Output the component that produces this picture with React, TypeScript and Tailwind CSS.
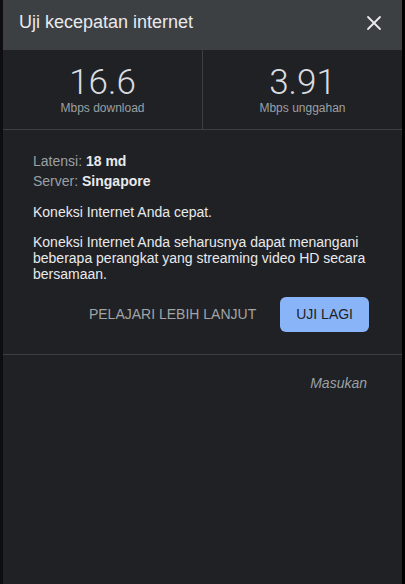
import { X } from 'lucide-react';

const stats = [
  { value: '16.6', label: 'Mbps download' },
  { value: '3.91', label: 'Mbps unggahan' },
];

export default function App() {
  return (
    <div
      className="flex h-[584px] w-full bg-black"
      style={{ fontFamily: '"Liberation Sans", Arial, sans-serif' }}
    >
      {/* Page behind the dialog */}
      <div className="w-[3px] shrink-0 bg-[#0e0e10]" />

      <div className="flex flex-1 flex-col bg-[#202124]">
        {/* Header */}
        <div className="flex h-[50px] shrink-0 items-center justify-between bg-[#3c4043] pb-[5px] pl-4 pr-[16px]">
          <h1 className="text-[18px] font-normal text-[#e8eaed]">Uji kecepatan internet</h1>
          <button className="flex h-6 w-6 items-center justify-center text-[#e8eaed]" aria-label="Tutup">
            <X className="h-[26px] w-[26px]" strokeWidth={1.8} />
          </button>
        </div>

        {/* Results */}
        <div className="flex h-[80px] shrink-0 border-b border-[#3c4043]">
          {stats.map((s, i) => (
            <div
              key={s.label}
              className={`flex flex-1 flex-col items-center pt-[16px] ${i === 0 ? 'border-r border-[#3c4043]' : ''}`}
            >
              <span
                className="text-[35px] leading-[34px] font-light text-[#dadce0]"
                style={{ fontFamily: 'Roboto, sans-serif' }}
              >
                {s.value}
              </span>
              <span className="mt-[2px] text-[12px] leading-[13px] text-[#9aa0a6]">{s.label}</span>
            </div>
          ))}
        </div>

        {/* Details */}
        <div className="pl-[30px] pr-[33px] pt-[21px] text-[14px] text-[#e8eaed]">
          <div className="leading-[20px]">
            <span className="text-[#9aa0a6]">Latensi: </span>
            <span className="font-bold">18 md</span>
          </div>
          <div className="leading-[20px]">
            <span className="text-[#9aa0a6]">Server: </span>
            <span className="font-bold">Singapore</span>
          </div>
          <p className="mt-[13px] leading-[16px]">Koneksi Internet Anda cepat.</p>
          <p className="mt-[14px] leading-[16px]">
            Koneksi Internet Anda seharusnya dapat menangani beberapa perangkat yang streaming video HD secara bersamaan.
          </p>

          <div className="mt-[15px] flex items-center justify-end gap-2">
            <button className="h-[35px] px-4 text-[14px] text-[#a0a4a8]">PELAJARI LEBIH LANJUT</button>
            <button className="h-[35px] rounded-[6px] bg-[#8ab4f8] px-4 text-[14px] text-[#202124]">UJI LAGI</button>
          </div>
        </div>

        <div className="mt-[22px] border-t border-[#3c4043]" />

        <div className="flex justify-end pr-[35px] pt-[20px]">
          <span className="text-[14px] italic leading-[16px] text-[#9aa0a6]">Masukan</span>
        </div>
      </div>

      <div className="w-[3px] shrink-0 bg-black" />
    </div>
  );
}
